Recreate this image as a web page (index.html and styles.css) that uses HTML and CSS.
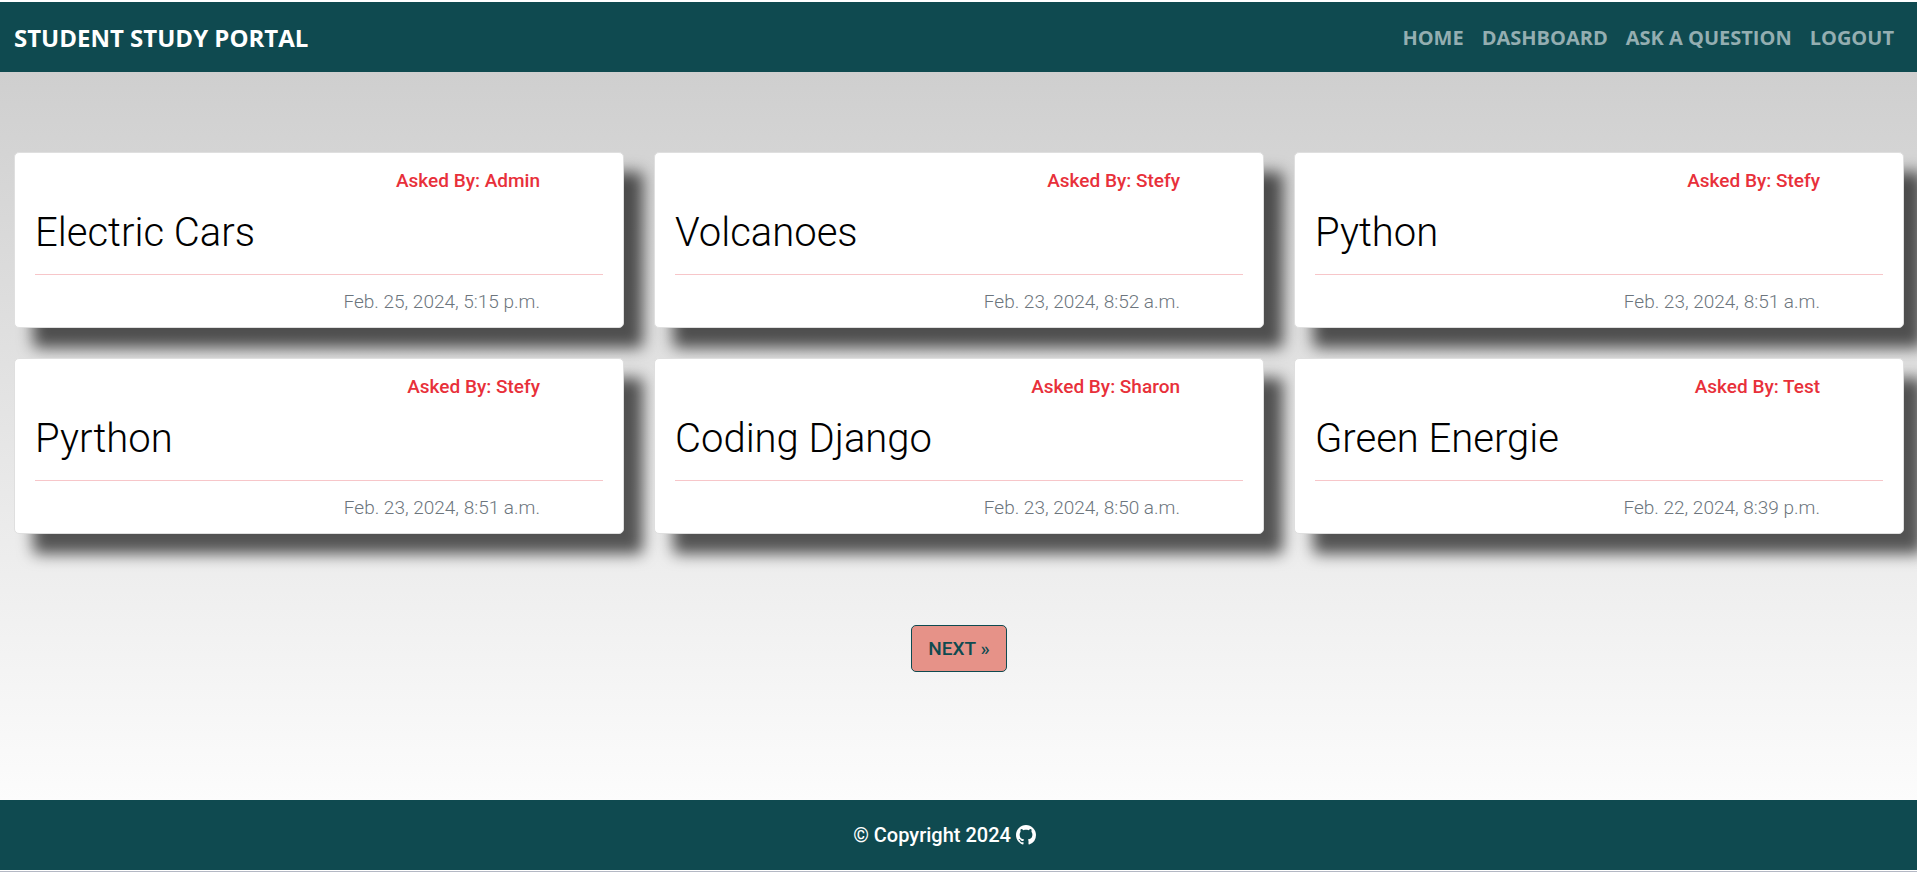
FILE: index.html
```html
<!DOCTYPE html>
<html lang="en">
<head>
<meta charset="utf-8">
<title>Student Study Portal</title>
<link rel="stylesheet" href="styles.css">
</head>
<body>
<header class="navbar">
  <a class="brand" href="#">STUDENT STUDY PORTAL</a>
  <nav class="nav-links">
    <a href="#">HOME</a>
    <a href="#">DASHBOARD</a>
    <a href="#">ASK A QUESTION</a>
    <a href="#">LOGOUT</a>
  </nav>
</header>
<main class="content">
  <section class="cards">
    <article class="card">
      <p class="author">Asked By: Admin</p>
      <h2 class="title"><a href="#">Electric Cars</a></h2>
      <hr class="rule">
      <p class="date">Feb. 25, 2024, 5:15 p.m.</p>
    </article>
    <article class="card">
      <p class="author">Asked By: Stefy</p>
      <h2 class="title"><a href="#">Volcanoes</a></h2>
      <hr class="rule">
      <p class="date">Feb. 23, 2024, 8:52 a.m.</p>
    </article>
    <article class="card">
      <p class="author">Asked By: Stefy</p>
      <h2 class="title"><a href="#">Python</a></h2>
      <hr class="rule">
      <p class="date">Feb. 23, 2024, 8:51 a.m.</p>
    </article>
    <article class="card">
      <p class="author">Asked By: Stefy</p>
      <h2 class="title"><a href="#">Pyrthon</a></h2>
      <hr class="rule">
      <p class="date">Feb. 23, 2024, 8:51 a.m.</p>
    </article>
    <article class="card">
      <p class="author">Asked By: Sharon</p>
      <h2 class="title"><a href="#">Coding Django</a></h2>
      <hr class="rule">
      <p class="date">Feb. 23, 2024, 8:50 a.m.</p>
    </article>
    <article class="card">
      <p class="author">Asked By: Test</p>
      <h2 class="title"><a href="#">Green Energie</a></h2>
      <hr class="rule">
      <p class="date">Feb. 22, 2024, 8:39 p.m.</p>
    </article>
  </section>
  <nav class="pager">
    <a class="next" href="#">NEXT »</a>
  </nav>
</main>
<footer class="footer">
  <p class="copyright">© Copyright 2024
    <a href="#" aria-label="GitHub"><svg class="github" viewBox="0 0 16 16" aria-hidden="true"><path fill="currentColor" d="M8 0C3.58 0 0 3.58 0 8c0 3.54 2.29 6.53 5.47 7.59.4.07.55-.17.55-.38 0-.19-.01-.82-.01-1.49-2.01.37-2.53-.49-2.69-.94-.09-.23-.48-.94-.82-1.13-.28-.15-.68-.52-.01-.53.63-.01 1.08.58 1.23.82.72 1.21 1.87.87 2.33.66.07-.52.28-.87.51-1.07-1.78-.2-3.64-.89-3.64-3.95 0-.87.31-1.59.82-2.15-.08-.2-.36-1.02.08-2.12 0 0 .67-.21 2.2.82.64-.18 1.32-.27 2-.27s1.36.09 2 .27c1.53-1.04 2.2-.82 2.2-.82.44 1.1.16 1.92.08 2.12.51.56.82 1.27.82 2.15 0 3.07-1.87 3.75-3.65 3.95.29.25.54.73.54 1.48 0 1.07-.01 1.93-.01 2.2 0 .21.15.46.55.38A8.01 8.01 0 0 0 16 8c0-4.42-3.58-8-8-8z"/></svg></a>
  </p>
</footer>
</body>
</html>
```
FILE: styles.css
```css
* { box-sizing: border-box; }

body {
  display: flex;
  flex-direction: column;
  min-height: 100vh;
  margin: 0;
  padding: 2px 0 1px;
  border-bottom: 1px solid #b4b8c4;
  overflow-x: hidden;
  background: #fff;
  font-family: Roboto, sans-serif;
  font-size: 19px;
  line-height: 30px;
}

a { color: inherit; text-decoration: none; }
p, h2 { margin: 0; }

.navbar {
  display: flex;
  align-items: center;
  justify-content: space-between;
  min-height: 70px;
  padding: 2px 23px 0 14px;
  background: #0f4a50;
  color: #fff;
  font-family: "Open Sans", sans-serif;
  font-weight: 700;
}

.brand { font-size: 24px; }

.nav-links {
  display: flex;
  gap: 18px;
  color: #94aeb1;
  font-size: 20px;
}

.content {
  flex: 1;
  padding: 80px 13px 0 14px;
  background: linear-gradient(#cfcfcf, #fcfcfc);
}

.cards {
  display: grid;
  grid-template-columns: repeat(3, 1fr);
  gap: 30px;
}

.card {
  padding: 13px 20px 10px;
  border: 1px solid #dfdfdf;
  border-radius: 5px;
  background: #fff;
  box-shadow: 19px 20px 15px rgba(0, 0, 0, 0.65);
}

.author {
  padding-right: 63px;
  color: #e8303a;
  font-weight: 500;
  text-align: right;
}

.title {
  margin: 13px 0 17px;
  color: #000;
  font-size: 40px;
  font-weight: 300;
  line-height: 48px;
}

.rule {
  height: 0;
  margin: 0 0 12px;
  border: 0;
  border-top: 1px solid #f7c6c9;
}

.date {
  padding-right: 63px;
  color: #6c757d;
  font-weight: 300;
  text-align: right;
}

.pager {
  display: flex;
  justify-content: center;
  padding-top: 91px;
}

.next {
  padding: 8px 16px 7px;
  border: 1px solid #0f4a50;
  border-radius: 5px;
  background: #e69288;
  color: #0f4a50;
  font-weight: 500;
}

.footer {
  display: flex;
  align-items: center;
  justify-content: center;
  min-height: 70px;
  padding-right: 28px;
  background: #0f4a50;
  color: #fff;
}

.copyright {
  display: flex;
  align-items: center;
  gap: 5px;
  font-size: 20px;
  font-weight: 500;
}

.github {
  display: block;
  width: 20px;
  height: 20px;
}
```
